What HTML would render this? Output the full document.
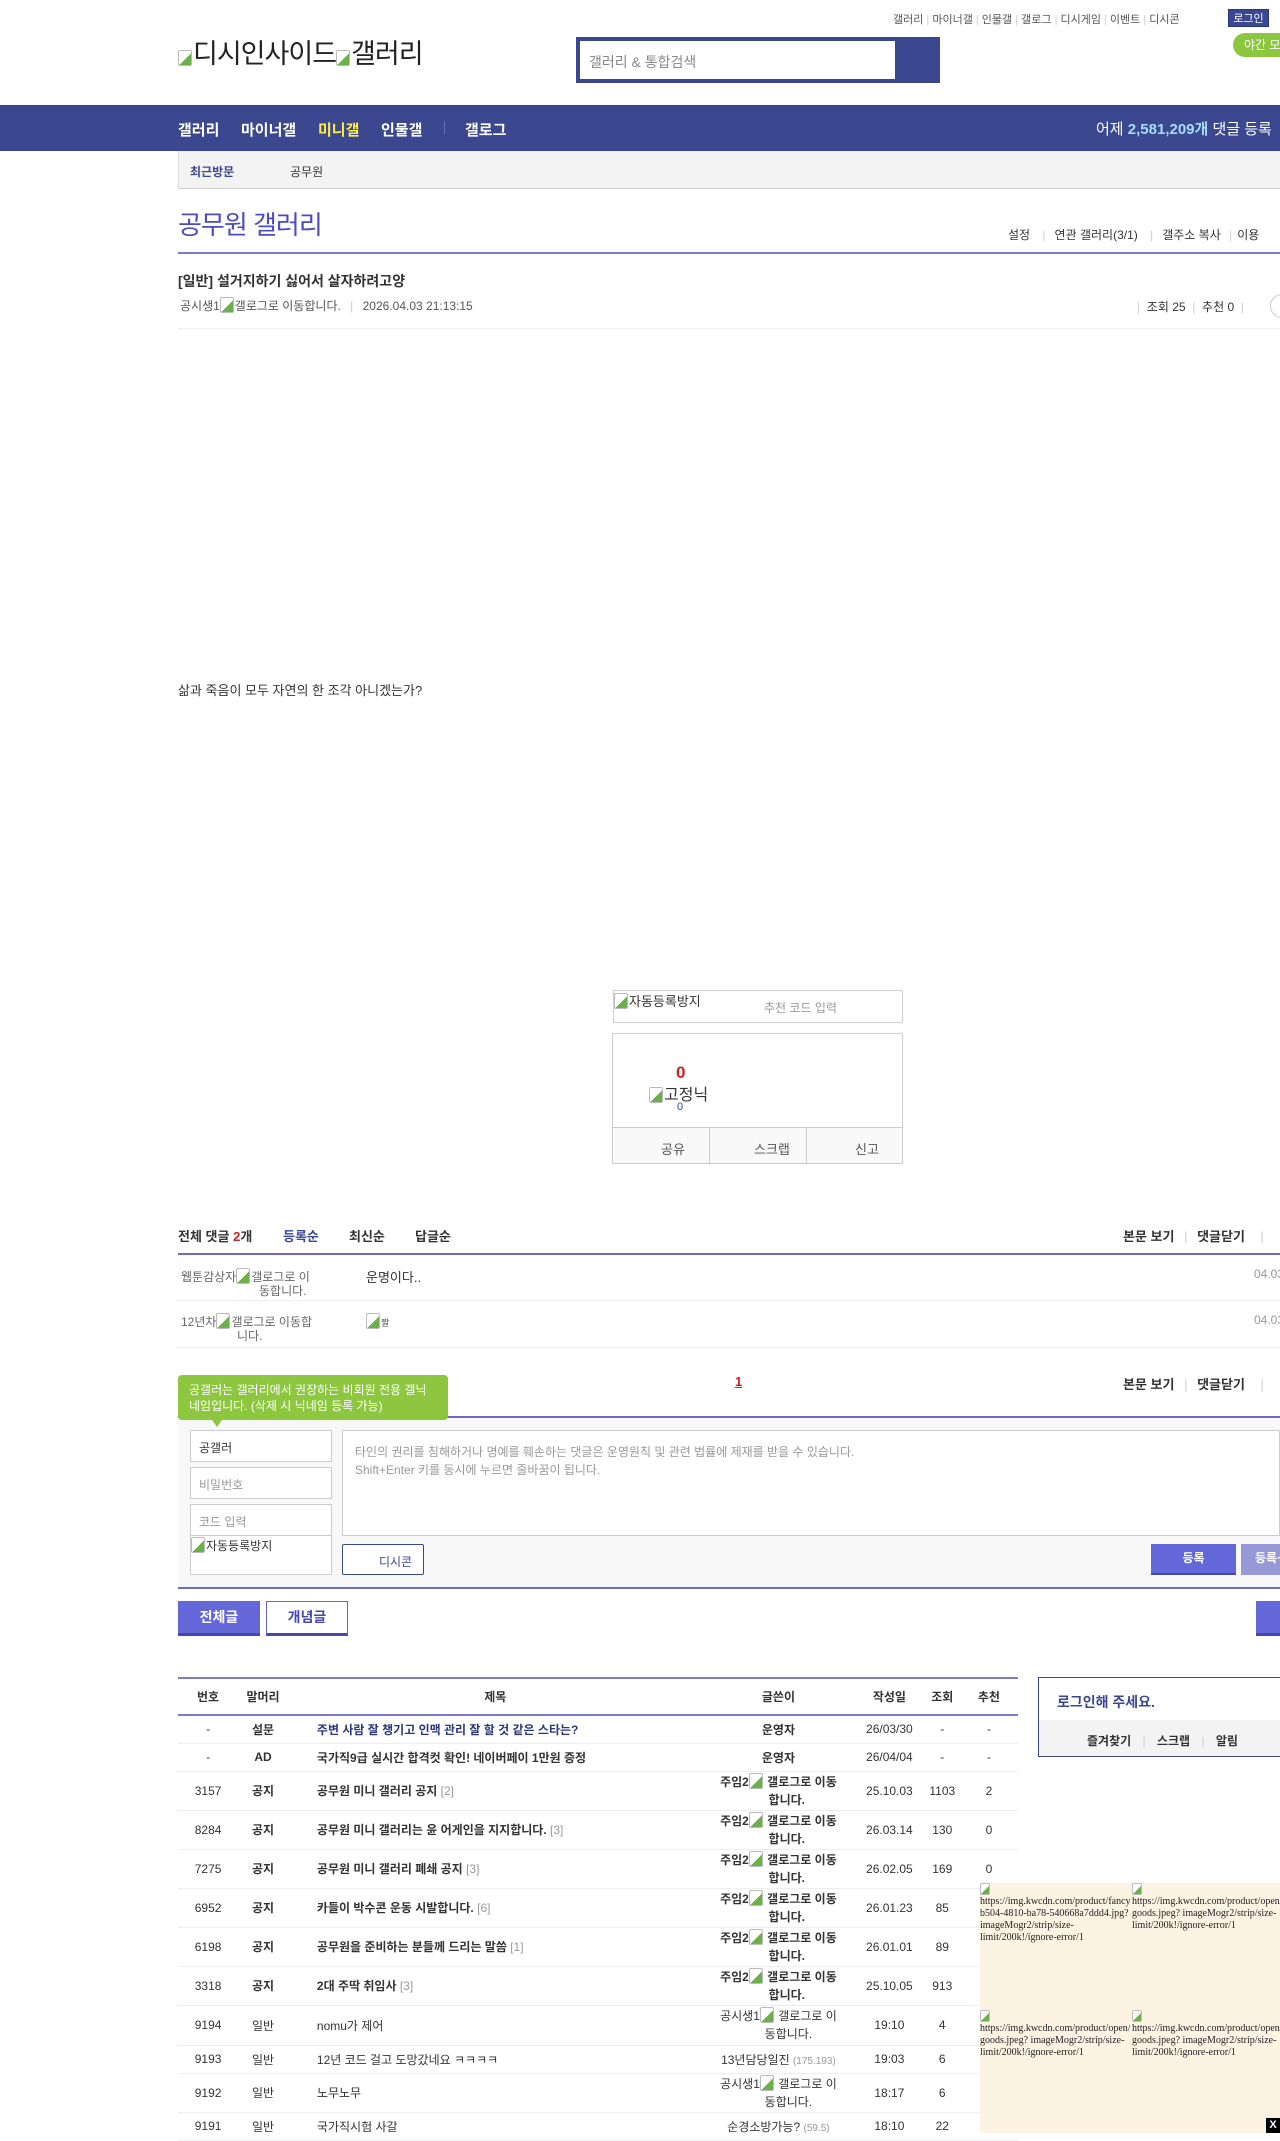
<!DOCTYPE html>
<html><head><meta charset="utf-8">
<style>
*{margin:0;padding:0;box-sizing:border-box}
body{width:1280px;height:2133px;overflow:hidden;position:relative;background:#fff;font-family:"Liberation Sans","Noto Sans CJK KR",sans-serif;font-size:12px;color:#333}
.a{position:absolute;white-space:nowrap}
.bi{display:inline-block;width:14px;height:16px;border:1px solid #bbb;border-radius:2px;background:linear-gradient(135deg,#fff 55%,#6bb04a 56%);vertical-align:-3px;margin-right:1px}
table{border-collapse:collapse}
.tb{position:absolute;left:178px;top:1677px;width:840px;border-top:2px solid #7b7bcc}
.tb td,.tb th{text-align:center;font-size:12px;color:#333;padding:0}
.tb th{height:37px;font-weight:bold;border-bottom:2px solid #7b7bcc}
.tb td{border-bottom:1px solid #eee}
.tb td.t{text-align:left;padding-left:29px;font-weight:bold;color:#333}
.tb .r{color:#999;font-weight:normal}
.sm{font-size:11px;color:#555}
.wr{line-height:18px;font-weight:bold}
</style></head><body>

<div class="a" style="left:893px;top:11px;font-size:11px;color:#555">갤러리 <span style="color:#ccc">|</span> 마이너갤 <span style="color:#ccc">|</span> 인물갤 <span style="color:#ccc">|</span> 갤로그 <span style="color:#ccc">|</span> 디시게임 <span style="color:#ccc">|</span> 이벤트 <span style="color:#ccc">|</span> 디시콘</div>
<div class="a" style="left:1228px;top:9px;width:41px;height:18px;background:#3b4890;color:#fff;font-size:11px;text-align:center;line-height:18px;border:1px solid #29367c">로그인</div>
<div class="a" style="left:1233px;top:33px;width:60px;height:24px;background:#8dc63f;border-radius:12px;color:#fff;font-size:12px;line-height:24px;padding-left:11px">야간 모드</div>

<div class="a" style="left:178px;top:39px;font-size:27px;color:#222;line-height:30px;letter-spacing:-1px"><span class="bi"></span>디시인사이드<span class="bi"></span>갤러리</div>

<div class="a" style="left:576px;top:37px;width:364px;height:46px;background:#3b4890"></div>
<div class="a" style="left:580px;top:41px;width:315px;height:38px;background:#fff;padding:11px 9px;font-size:14px;color:#888">갤러리 &amp; 통합검색</div>

<div class="a" style="left:0;top:105px;width:1280px;height:46px;background:#3b4890"></div>
<div class="a" style="left:178px;top:119px;font-size:15px;font-weight:bold;color:#fff">갤러리</div>
<div class="a" style="left:241px;top:119px;font-size:15px;font-weight:bold;color:#fff">마이너갤</div>
<div class="a" style="left:318px;top:119px;font-size:15px;font-weight:bold;color:#ffed45">미니갤</div>
<div class="a" style="left:381px;top:119px;font-size:15px;font-weight:bold;color:#fff">인물갤</div>
<div class="a" style="left:444px;top:121px;width:1px;height:13px;background:#6b76b0"></div>
<div class="a" style="left:465px;top:119px;font-size:15px;font-weight:bold;color:#fff">갤로그</div>
<div class="a" style="left:1096px;top:118px;font-size:15px;color:#fff">어제 <b style="color:#a8dcff">2,581,209개</b> 댓글 등록</div>

<div class="a" style="left:178px;top:151px;width:1102px;height:38px;background:#f3f3f3;border-left:1px solid #ddd;border-bottom:1px solid #ccc"></div>
<div class="a" style="left:190px;top:163px;font-size:12px;font-weight:bold;color:#3b4890">최근방문</div>
<div class="a" style="left:290px;top:163px;font-size:12px;color:#333">공무원</div>

<div class="a" style="left:178px;top:205px;font-size:26px;color:#4c4cbf;letter-spacing:-1px">공무원 갤러리</div>
<div class="a" style="left:1008px;top:226px;font-size:12px;color:#333">설정 <span style="color:#ccc;margin:0 9px">|</span>연관 갤러리(3/1) <span style="color:#ccc;margin:0 9px">|</span>갤주소 복사 <span style="color:#ccc;margin:0 5px">|</span>이용</div>
<div class="a" style="left:178px;top:252px;width:1102px;height:2px;background:#7b7bcc"></div>

<div class="a" style="left:178px;top:271px;font-size:14px;font-weight:bold;color:#333">[일반] 설거지하기 싫어서 살자하려고양</div>
<div class="a" style="left:180px;top:297px;font-size:12px;color:#555">공시생1<span class="bi"></span>갤로그로 이동합니다. <span style="color:#ccc;margin:0 6px">|</span> 2026.04.03 21:13:15</div>
<div class="a" style="left:1137px;top:298px;font-size:12px;color:#333"><span style="color:#ccc">|</span> &nbsp;조회 25 &nbsp;<span style="color:#ccc">|</span> &nbsp;추천 0 &nbsp;<span style="color:#ccc">|</span></div>
<div class="a" style="left:1270px;top:294px;width:24px;height:24px;border:1px solid #ccc;border-radius:12px"></div>
<div class="a" style="left:178px;top:328px;width:1102px;height:1px;background:#eee"></div>

<div class="a" style="left:178px;top:680px;font-size:13px;color:#333">삶과 죽음이 모두 자연의 한 조각 아니겠는가?</div>

<div class="a" style="left:613px;top:990px;width:290px;height:33px;border:1px solid #ccc;border-radius:2px"></div>
<div class="a" style="left:614px;top:991px;font-size:13px;color:#333"><span class="bi"></span>자동등록방지</div>
<div class="a" style="left:764px;top:999px;font-size:12px;color:#999">추천 코드 입력</div>
<div class="a" style="left:612px;top:1033px;width:291px;height:131px;border:1px solid #ccc;border-radius:2px"></div>
<div class="a" style="left:612px;top:1127px;width:291px;height:37px;border:1px solid #ccc;background:#f9f9f9"></div>
<div class="a" style="left:709px;top:1127px;width:1px;height:37px;background:#ccc"></div>
<div class="a" style="left:806px;top:1127px;width:1px;height:37px;background:#ccc"></div>
<div class="a" style="left:661px;top:1139px;font-size:13px;color:#555">공유</div>
<div class="a" style="left:754px;top:1139px;font-size:13px;color:#555">스크랩</div>
<div class="a" style="left:855px;top:1139px;font-size:13px;color:#555">신고</div>
<div class="a" style="left:676px;top:1063px;font-size:17px;font-weight:bold;color:#c22">0</div>
<div class="a" style="left:649px;top:1081px;font-size:16px;color:#333"><span class="bi"></span>고정닉</div>
<div class="a" style="left:677px;top:1101px;font-size:11px;color:#3b4890">0</div>

<div class="a" style="left:178px;top:1226px;font-size:13px;font-weight:bold;color:#333">전체 댓글 <span style="color:#c22">2</span>개</div>
<div class="a" style="left:283px;top:1226px;font-size:13px;font-weight:bold;color:#3b4890">등록순</div>
<div class="a" style="left:349px;top:1226px;font-size:13px;font-weight:bold;color:#333">최신순</div>
<div class="a" style="left:415px;top:1226px;font-size:13px;font-weight:bold;color:#333">답글순</div>
<div class="a" style="left:1123px;top:1226px;font-size:13px;font-weight:bold;color:#333">본문 보기 <span style="color:#ccc;font-weight:normal;margin:0 6px">|</span> 댓글닫기 <span style="color:#ccc;font-weight:normal;margin:0 12px">|</span></div>
<div class="a" style="left:178px;top:1253px;width:1102px;height:2px;background:#6b6bc8"></div>
<div class="a" style="left:181px;top:1268px;font-size:12px;color:#666;line-height:14px">웹툰감상자<span class="bi"></span>갤로그로 이<br><span style="margin-left:78px">동합니다.</span></div>
<div class="a" style="left:366px;top:1267px;font-size:13px;color:#333">운명이다..</div>
<div class="a" style="left:1254px;top:1267px;font-size:12px;color:#999">04.03</div>
<div class="a" style="left:178px;top:1300px;width:1102px;height:1px;background:#eee"></div>
<div class="a" style="left:181px;top:1313px;font-size:12px;color:#666;line-height:14px">12년차<span class="bi"></span>갤로그로 이동합<br><span style="margin-left:56px">니다.</span></div>
<div class="a" style="left:366px;top:1313px;font-size:9px;color:#555"><span class="bi"></span>짤</div>
<div class="a" style="left:1254px;top:1313px;font-size:12px;color:#999">04.03</div>
<div class="a" style="left:178px;top:1347px;width:1102px;height:1px;background:#eee"></div>

<div class="a" style="left:735px;top:1374px;font-size:13px;font-weight:bold;color:#c22;text-decoration:underline">1</div>
<div class="a" style="left:1123px;top:1374px;font-size:13px;font-weight:bold;color:#333">본문 보기 <span style="color:#ccc;font-weight:normal;margin:0 6px">|</span> 댓글닫기 <span style="color:#ccc;font-weight:normal;margin:0 12px">|</span></div>

<div class="a" style="left:178px;top:1416px;width:1102px;height:173px;background:#f8f8f8;border-top:2px solid #6b6bc8;border-bottom:2px solid #6b6bc8"></div>
<div class="a" style="left:178px;top:1375px;width:270px;height:45px;background:#8dc63f;border-radius:4px;color:#fff;font-size:12px;line-height:16px;padding:7px 11px;white-space:normal">공갤러는 갤러리에서 권장하는 비회원 전용 갤닉네임입니다. (삭제 시 닉네임 등록 가능)</div>
<div class="a" style="left:212px;top:1420px;width:0;height:0;border-left:5px solid transparent;border-right:5px solid transparent;border-top:7px solid #8dc63f"></div>
<div class="a" style="left:190px;top:1430px;width:142px;height:32px;background:#fff;border:1px solid #ccc;padding:8px 8px;color:#333">공갤러</div>
<div class="a" style="left:190px;top:1467px;width:142px;height:32px;background:#fff;border:1px solid #ccc;padding:8px 8px;color:#999">비밀번호</div>
<div class="a" style="left:190px;top:1504px;width:142px;height:32px;background:#fff;border:1px solid #ccc;padding:8px 8px;color:#999">코드 입력</div>
<div class="a" style="left:190px;top:1535px;width:142px;height:40px;background:#fff;border:1px solid #ccc;color:#333;padding-top:1px"><span class="bi"></span>자동등록방지</div>
<div class="a" style="left:342px;top:1430px;width:938px;height:106px;background:#fff;border:1px solid #ccc;padding:12px 12px;color:#999;font-size:12px;line-height:18px">타인의 권리를 침해하거나 명예를 훼손하는 댓글은 운영원칙 및 관련 법률에 제재를 받을 수 있습니다.<br>Shift+Enter 키를 동시에 누르면 줄바꿈이 됩니다.</div>
<div class="a" style="left:342px;top:1544px;width:82px;height:31px;background:#fff;border:1px solid #3b4890;border-radius:2px;color:#3b4890;padding:8px 0 0 36px">디시콘</div>
<div class="a" style="left:1151px;top:1544px;width:85px;height:31px;background:#6467d8;border-bottom:2px solid #4648b0;color:#fff;font-weight:bold;text-align:center;line-height:29px">등록</div>
<div class="a" style="left:1241px;top:1544px;width:60px;height:31px;background:#9798d6;color:#fff;font-weight:bold;line-height:29px;padding-left:14px">등록+추천</div>

<div class="a" style="left:178px;top:1601px;width:82px;height:35px;background:#6467d8;border-bottom:3px solid #4648b0;color:#fff;font-size:14px;font-weight:bold;text-align:center;line-height:33px">전체글</div>
<div class="a" style="left:266px;top:1601px;width:82px;height:35px;background:#fff;border:1px solid #6467d8;border-bottom:3px solid #4648b0;color:#4648b0;font-size:14px;font-weight:bold;text-align:center;line-height:31px">개념글</div>
<div class="a" style="left:1256px;top:1601px;width:40px;height:35px;background:#6467d8;border-bottom:3px solid #4648b0"></div>

<table class="tb">
<colgroup><col style="width:58px"><col style="width:48px"><col style="width:400px"><col style="width:146px"><col style="width:68px"><col style="width:34px"><col style="width:56px"></colgroup>
<tr><th>번호</th><th>말머리</th><th>제목</th><th>글쓴이</th><th>작성일</th><th>조회</th><th>추천</th></tr>
<tr style="height:28px"><td>-</td><td><b>설문</b></td><td class="t" style="color:#29367c">주변 사람 잘 챙기고 인맥 관리 잘 할 것 같은 스타는?</td><td><b>운영자</b></td><td class="sm">26/03/30</td><td class="sm">-</td><td class="sm">-</td></tr>
<tr style="height:28px"><td>-</td><td><b>AD</b></td><td class="t">국가직9급 실시간 합격컷 확인! 네이버페이 1만원 증정</td><td><b>운영자</b></td><td class="sm">26/04/04</td><td class="sm">-</td><td class="sm">-</td></tr>
<tr style="height:39px"><td class="sm">3157</td><td><b>공지</b></td><td class="t">공무원 미니 갤러리 공지 <span class="r">[2]</span></td><td class="wr">주임2<span class="bi"></span> 갤로그로 이동<br>&nbsp;&nbsp;&nbsp;&nbsp;&nbsp;합니다.</td><td class="sm">25.10.03</td><td class="sm">1103</td><td class="sm">2</td></tr>
<tr style="height:39px"><td class="sm">8284</td><td><b>공지</b></td><td class="t">공무원 미니 갤러리는 윤 어게인을 지지합니다. <span class="r">[3]</span></td><td class="wr">주임2<span class="bi"></span> 갤로그로 이동<br>&nbsp;&nbsp;&nbsp;&nbsp;&nbsp;합니다.</td><td class="sm">26.03.14</td><td class="sm">130</td><td class="sm">0</td></tr>
<tr style="height:39px"><td class="sm">7275</td><td><b>공지</b></td><td class="t">공무원 미니 갤러리 폐쇄 공지 <span class="r">[3]</span></td><td class="wr">주임2<span class="bi"></span> 갤로그로 이동<br>&nbsp;&nbsp;&nbsp;&nbsp;&nbsp;합니다.</td><td class="sm">26.02.05</td><td class="sm">169</td><td class="sm">0</td></tr>
<tr style="height:39px"><td class="sm">6952</td><td><b>공지</b></td><td class="t">카들이 박수콘 운동 시발합니다. <span class="r">[6]</span></td><td class="wr">주임2<span class="bi"></span> 갤로그로 이동<br>&nbsp;&nbsp;&nbsp;&nbsp;&nbsp;합니다.</td><td class="sm">26.01.23</td><td class="sm">85</td><td class="sm">0</td></tr>
<tr style="height:39px"><td class="sm">6198</td><td><b>공지</b></td><td class="t">공무원을 준비하는 분들께 드리는 말씀 <span class="r">[1]</span></td><td class="wr">주임2<span class="bi"></span> 갤로그로 이동<br>&nbsp;&nbsp;&nbsp;&nbsp;&nbsp;합니다.</td><td class="sm">26.01.01</td><td class="sm">89</td><td class="sm">0</td></tr>
<tr style="height:39px"><td class="sm">3318</td><td><b>공지</b></td><td class="t">2대 주딱 취임사 <span class="r">[3]</span></td><td class="wr">주임2<span class="bi"></span> 갤로그로 이동<br>&nbsp;&nbsp;&nbsp;&nbsp;&nbsp;합니다.</td><td class="sm">25.10.05</td><td class="sm">913</td><td class="sm">0</td></tr>
<tr style="height:40px"><td class="sm">9194</td><td>일반</td><td class="t" style="font-weight:normal">nomu가 제어</td><td style="line-height:18px">공시생1<span class="bi"></span> 갤로그로 이<br>&nbsp;&nbsp;&nbsp;&nbsp;&nbsp;&nbsp;동합니다.</td><td class="sm">19:10</td><td class="sm">4</td><td class="sm">0</td></tr>
<tr style="height:28px"><td class="sm">9193</td><td>일반</td><td class="t" style="font-weight:normal">12년 코드 걸고 도망갔네요 ㅋㅋㅋㅋ</td><td>13년담당일진 <span style="font-size:10px;color:#999">(175.193)</span></td><td class="sm">19:03</td><td class="sm">6</td><td class="sm">0</td></tr>
<tr style="height:39px"><td class="sm">9192</td><td>일반</td><td class="t" style="font-weight:normal">노무노무</td><td style="line-height:18px">공시생1<span class="bi"></span> 갤로그로 이<br>&nbsp;&nbsp;&nbsp;&nbsp;&nbsp;&nbsp;동합니다.</td><td class="sm">18:17</td><td class="sm">6</td><td class="sm">0</td></tr>
<tr style="height:28px"><td class="sm">9191</td><td>일반</td><td class="t" style="font-weight:normal">국가직시험 사갈</td><td>순경소방가능? <span style="font-size:10px;color:#999">(59.5)</span></td><td class="sm">18:10</td><td class="sm">22</td><td class="sm">0</td></tr>
</table>

<div class="a" style="left:1038px;top:1677px;width:260px;height:80px;border:1px solid #3b4890;background:#fff"></div>
<div class="a" style="left:1039px;top:1720px;width:260px;height:36px;background:#f3f3f3"></div>
<div class="a" style="left:1057px;top:1692px;font-size:14px;font-weight:bold;color:#3b4890">로그인해 주세요.</div>
<div class="a" style="left:1087px;top:1732px;font-size:12px;font-weight:bold;color:#333">즐겨찾기 <span style="color:#ccc;font-weight:normal;margin:0 8px">|</span> 스크랩 <span style="color:#ccc;font-weight:normal;margin:0 8px">|</span> 알림</div>

<div class="a" style="left:980px;top:1883px;width:300px;height:250px;background:#fdf3e3"></div>
<div class="a" style="left:980px;top:1883px;width:150px;font-family:'Liberation Serif',serif;font-size:10px;line-height:12px;color:#222;white-space:normal;overflow:hidden;height:80px"><span class="bi" style="width:10px;height:12px"></span><br>https://img.kwcdn.com/product/fancy/ b504-4810-ba78-540668a7ddd4.jpg? imageMogr2/strip/size-limit/200k!/ignore-error/1</div>
<div class="a" style="left:1132px;top:1883px;width:150px;font-family:'Liberation Serif',serif;font-size:10px;line-height:12px;color:#222;white-space:normal;overflow:hidden;height:80px"><span class="bi" style="width:10px;height:12px"></span><br>https://img.kwcdn.com/product/open/ goods.jpeg? imageMogr2/strip/size-limit/200k!/ignore-error/1</div>
<div class="a" style="left:980px;top:2010px;width:150px;font-family:'Liberation Serif',serif;font-size:10px;line-height:12px;color:#222;white-space:normal;overflow:hidden;height:70px"><span class="bi" style="width:10px;height:12px"></span><br>https://img.kwcdn.com/product/open/ goods.jpeg? imageMogr2/strip/size-limit/200k!/ignore-error/1</div>
<div class="a" style="left:1132px;top:2010px;width:150px;font-family:'Liberation Serif',serif;font-size:10px;line-height:12px;color:#222;white-space:normal;overflow:hidden;height:70px"><span class="bi" style="width:10px;height:12px"></span><br>https://img.kwcdn.com/product/open/ goods.jpeg? imageMogr2/strip/size-limit/200k!/ignore-error/1</div>
<div class="a" style="left:1266px;top:2118px;width:14px;height:15px;background:#000;color:#fff;font-size:11px;font-weight:bold;text-align:center;line-height:15px">X</div>

</body></html>
